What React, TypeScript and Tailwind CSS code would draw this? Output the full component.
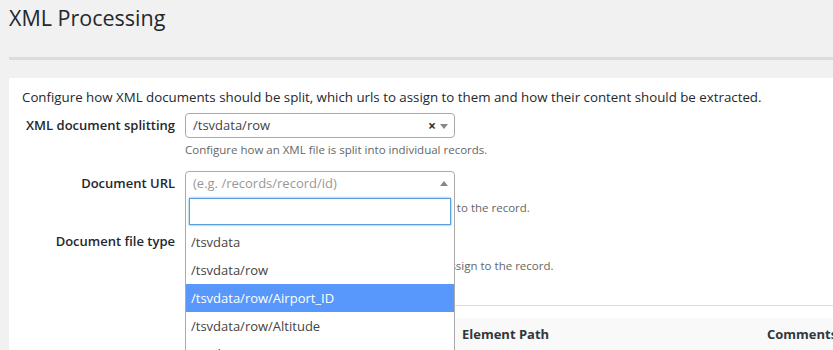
import React from 'react';

const font = "font-['Open_Sans','Liberation_Sans',sans-serif]";

const Row = ({
  label,
  help,
  children,
}: {
  label: string;
  help: string;
  children: React.ReactNode;
}) => (
  <div className="flex">
    <label className="w-[153px] shrink-0 text-right text-[13px] font-semibold leading-[25px] text-[#23282d]">
      {label}
    </label>
    <div className="ml-[10px] w-[270px] shrink-0">
      {children}
      <p className="mt-[3px] whitespace-nowrap text-[11.5px] leading-[18px] text-[#666]">
        {help}
      </p>
    </div>
  </div>
);

const ArrowDown = () => (
  <span className="absolute right-[6px] top-[10px] h-0 w-0 border-x-[4px] border-t-[5px] border-x-transparent border-t-[#888]" />
);

const ArrowUp = () => (
  <span className="absolute right-[6px] top-[9px] h-0 w-0 border-x-[4px] border-b-[5px] border-x-transparent border-b-[#888]" />
);

const options = [
  '/tsvdata',
  '/tsvdata/row',
  '/tsvdata/row/Airport_ID',
  '/tsvdata/row/Altitude',
  '/tsvdata/row/City',
];

export default function App() {
  return (
    <div className={`${font} h-[350px] overflow-hidden bg-[#f1f1f1] pl-[9px] text-[#23282d]`}>
      <h1 className="pt-[3px] text-[21.5px] font-normal leading-[30px]">XML Processing</h1>
      <div className="mt-[24px] h-[3px] bg-[#dcdcdc]" />

      <div className="mt-[18px] h-[300px] bg-white pl-[13px] pt-[9px]">
        <p className="whitespace-nowrap text-[13.3px] leading-[20px] text-[#23282d]">
          Configure how XML documents should be split, which urls to assign to them and how their content should be extracted.
        </p>

        <div className="mt-[6px] flex flex-col gap-[12px]">
          <Row label="XML document splitting" help="Configure how an XML file is split into individual records.">
            <div className="relative flex h-[25px] items-center rounded-[4px] border border-[#aaa] bg-white pl-[7px] text-[13px] text-[#444]">
              /tsvdata/row
              <span className="absolute right-[18px] top-[2px] text-[14px] font-bold leading-[20px] text-[#333]">×</span>
              <ArrowDown />
            </div>
          </Row>

          <Row label="Document URL" help="Select the element whose value is the url to assign to the record.">
            <div className="relative z-10 flex h-[25px] items-center rounded-t-[4px] border border-[#aaa] bg-white pl-[7px] text-[13px] text-[#999]">
              (e.g. /records/record/id)
              <ArrowUp />
              <div className="absolute left-[-1px] right-[-1px] top-full border border-t-0 border-[#aaa] bg-white">
                <div className="px-[3px] pt-[3px] pb-[3px]">
                  <div className="h-[27px] w-full border border-[#5b9dd9] shadow-[0_0_2px_rgba(30,140,190,0.8)]" />
                </div>
                <ul>
                  {options.map((o) => (
                    <li
                      key={o}
                      className={
                        o === '/tsvdata/row/Airport_ID'
                          ? 'h-[28px] bg-[#5897fb] px-[5px] text-[13px] leading-[28px] text-white'
                          : 'h-[28px] px-[5px] text-[13px] leading-[28px] text-[#444]'
                      }
                    >
                      {o}
                    </li>
                  ))}
                </ul>
              </div>
            </div>
          </Row>

          <Row label="Document file type" help="Select an element whose value is the file type to assign to the record.">
            <div className="relative flex h-[25px] items-center rounded-[4px] border border-[#aaa] bg-white pl-[7px] text-[13px] text-[#444]">
              XML
              <ArrowDown />
            </div>
          </Row>
        </div>

        <div className="ml-[163px] mt-[30px] border-t border-[#ddd] pt-[12px]">
          <div className="grid grid-cols-[270px_305px_1fr] bg-[#f9f9f9] text-[13px] font-bold leading-[32px] text-[#32373c]">
            <div className="pl-[7px]">Field</div>
            <div className="pl-[7px]">Element Path</div>
            <div className="pl-[7px]">Comments</div>
          </div>
        </div>
      </div>
    </div>
  );
}
